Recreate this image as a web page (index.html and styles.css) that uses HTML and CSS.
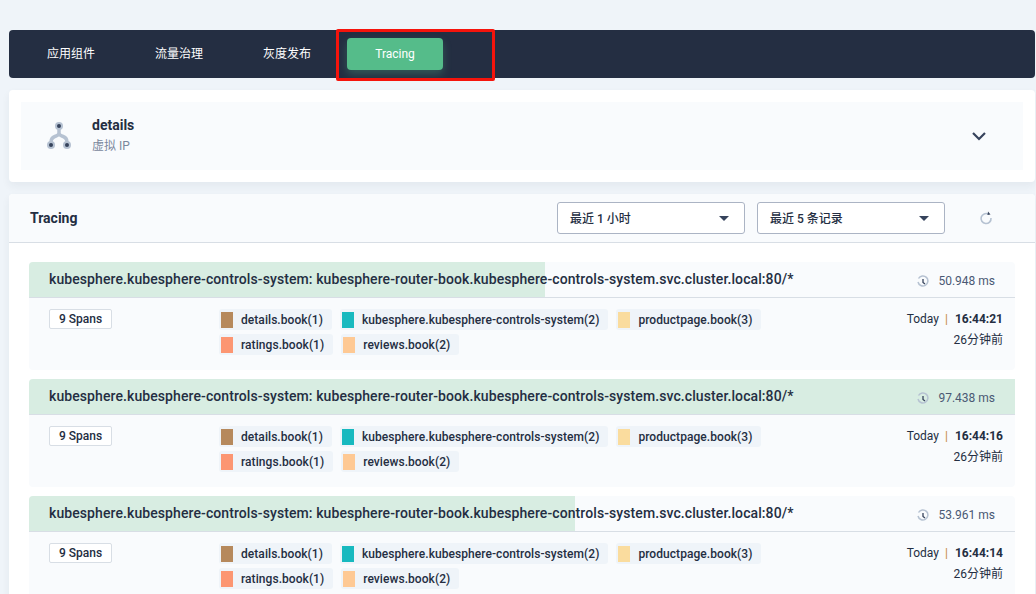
FILE: index.html
```html
<!DOCTYPE html>
<html>
<head>
	<meta charset="utf-8">
	<title>Tracing</title>
	<link rel="stylesheet" href="styles.css">
</head>
<body>
	<!-- 顶部标签栏 -->
	<div class="tabs">
		<a class="tab">应用组件</a>
		<a class="tab">流量治理</a>
		<a class="tab">灰度发布</a>
		<a class="tab tab-active">Tracing</a>
		<div class="mark"></div>
	</div>
	<!-- 服务信息 -->
	<div class="card service-card">
		<div class="service">
			<svg class="service-icon" width="32" height="32" viewBox="0 0 32 32">
				<path d="M16 6V13Q16 15 13 16Q8 17.500 8 22V25M16 13Q16 15 19 16Q24 17.500 24 22V25" fill="none" stroke="#b6c2d2" stroke-width="3.500"/>
				<circle cx="16" cy="6" r="4" fill="#b6c2d2"/>
				<circle cx="8" cy="25" r="4" fill="#b6c2d2"/>
				<circle cx="24" cy="25" r="4" fill="#b6c2d2"/>
				<circle cx="16" cy="6" r="2" fill="#36435c"/>
				<circle cx="8" cy="25" r="2" fill="#36435c"/>
				<circle cx="24" cy="25" r="2" fill="#36435c"/>
			</svg>
			<div class="service-text">
				<div class="service-name">details</div>
				<div class="service-ip">虚拟 IP</div>
			</div>
			<svg class="service-arrow" width="16" height="10" viewBox="0 0 16 10">
				<path d="M2 2L8 8L14 2" fill="none" stroke="#36435c" stroke-width="2.200"/>
			</svg>
		</div>
	</div>
	<!-- Tracing 列表 -->
	<div class="card trace-card">
		<div class="trace-head">
			<h3>Tracing</h3>
			<div class="select">最近 1 小时<i class="caret"></i></div>
			<div class="select">最近 5 条记录<i class="caret"></i></div>
			<svg class="refresh" width="16" height="16" viewBox="0 0 16 16">
				<path d="M10.500 4.200A5 5 0 1 0 13 8" fill="none" stroke="#b6c2d2" stroke-width="1.600"/>
				<path d="M10 1.500L12.500 4.500L9.500 5Z" fill="#36435c"/>
			</svg>
		</div>
		<div class="trace-list">
			<div class="trace">
				<div class="trace-title">
					<div class="trace-bar" style="width: 52.3%"></div>
					<span class="trace-url">kubesphere.kubesphere-controls-system: kubesphere-router-book.kubesphere-controls-system.svc.cluster.local:80/*</span>
					<svg class="clock" width="14" height="14" viewBox="0 0 14 14">
						<path d="M2.500 3.500A5 5 0 1 1 2 7" fill="none" stroke="#b6c2d2" stroke-width="1.500"/>
						<path d="M7 4V7.500L9 9" fill="none" stroke="#36435c" stroke-width="1.300"/>
					</svg>
					<span class="trace-time">50.948 ms</span>
				</div>
				<div class="trace-body">
					<div class="spans">9 Spans</div>
					<div class="services">
						<div class="svc"><i class="dot c1"></i>details.book(1)</div>
						<div class="svc"><i class="dot c2"></i>kubesphere.kubesphere-controls-system(2)</div>
						<div class="svc"><i class="dot c3"></i>productpage.book(3)</div>
						<div class="svc"><i class="dot c4"></i>ratings.book(1)</div>
						<div class="svc"><i class="dot c5"></i>reviews.book(2)</div>
					</div>
					<div class="when">
						<div>Today<span class="sep">|</span><b>16:44:21</b></div>
						<div class="ago">26分钟前</div>
					</div>
				</div>
			</div>
			<div class="trace">
				<div class="trace-title">
					<div class="trace-bar" style="width: 100%"></div>
					<span class="trace-url">kubesphere.kubesphere-controls-system: kubesphere-router-book.kubesphere-controls-system.svc.cluster.local:80/*</span>
					<svg class="clock" width="14" height="14" viewBox="0 0 14 14">
						<path d="M2.500 3.500A5 5 0 1 1 2 7" fill="none" stroke="#b6c2d2" stroke-width="1.500"/>
						<path d="M7 4V7.500L9 9" fill="none" stroke="#36435c" stroke-width="1.300"/>
					</svg>
					<span class="trace-time">97.438 ms</span>
				</div>
				<div class="trace-body">
					<div class="spans">9 Spans</div>
					<div class="services">
						<div class="svc"><i class="dot c1"></i>details.book(1)</div>
						<div class="svc"><i class="dot c2"></i>kubesphere.kubesphere-controls-system(2)</div>
						<div class="svc"><i class="dot c3"></i>productpage.book(3)</div>
						<div class="svc"><i class="dot c4"></i>ratings.book(1)</div>
						<div class="svc"><i class="dot c5"></i>reviews.book(2)</div>
					</div>
					<div class="when">
						<div>Today<span class="sep">|</span><b>16:44:16</b></div>
						<div class="ago">26分钟前</div>
					</div>
				</div>
			</div>
			<div class="trace">
				<div class="trace-title">
					<div class="trace-bar" style="width: 55.4%"></div>
					<span class="trace-url">kubesphere.kubesphere-controls-system: kubesphere-router-book.kubesphere-controls-system.svc.cluster.local:80/*</span>
					<svg class="clock" width="14" height="14" viewBox="0 0 14 14">
						<path d="M2.500 3.500A5 5 0 1 1 2 7" fill="none" stroke="#b6c2d2" stroke-width="1.500"/>
						<path d="M7 4V7.500L9 9" fill="none" stroke="#36435c" stroke-width="1.300"/>
					</svg>
					<span class="trace-time">53.961 ms</span>
				</div>
				<div class="trace-body">
					<div class="spans">9 Spans</div>
					<div class="services">
						<div class="svc"><i class="dot c1"></i>details.book(1)</div>
						<div class="svc"><i class="dot c2"></i>kubesphere.kubesphere-controls-system(2)</div>
						<div class="svc"><i class="dot c3"></i>productpage.book(3)</div>
						<div class="svc"><i class="dot c4"></i>ratings.book(1)</div>
						<div class="svc"><i class="dot c5"></i>reviews.book(2)</div>
					</div>
					<div class="when">
						<div>Today<span class="sep">|</span><b>16:44:14</b></div>
						<div class="ago">26分钟前</div>
					</div>
				</div>
			</div>
		</div>
	</div>
</body>
</html>
```
FILE: styles.css
```css
*{margin: 0px;padding: 0px;box-sizing: border-box;}
html,body{height: 594px;overflow: hidden;}
body{
	background: #eff4f9;
	padding: 30px 1px 0px 9px;
	font-family: Roboto, "Noto Sans CJK SC", sans-serif;
	font-size: 12px;
	color: #242e42;
}
.tabs{
	position: relative;
	display: flex;
	gap: 12px;
	height: 48px;
	padding: 8px 14px;
	background: #242e42;
	border-radius: 4px;
}
.tab{
	width: 96px;
	height: 32px;
	line-height: 33px;
	text-align: center;
	color: #fff;
}
.tab-active{
	background: #55bc8a;
	border-radius: 4px;
	box-shadow: 0px 4px 8px rgba(85,188,138,0.3);
}
.mark{
	position: absolute;
	left: 327px;
	top: -1px;
	width: 159px;
	height: 52px;
	border: 3px solid #f5140c;
	border-radius: 2px;
}
.card{
	background: #fff;
	border-radius: 4px;
	box-shadow: 0px 4px 8px rgba(36,46,66,0.06);
}
.service-card{
	margin-top: 12px;
	padding: 12px;
}
.service{
	display: flex;
	align-items: center;
	height: 68px;
	padding: 0px 36px 0px 22px;
	background: #f9fbfd;
}
.service-text{
	flex: 1;
	margin-left: 17px;
	padding-bottom: 2px;
}
.service-name{
	font-size: 14px;
	font-weight: 700;
	line-height: 20px;
}
.service-ip{
	margin-top: 1px;
	color: #79879c;
	line-height: 20px;
}
.trace-card{
	margin-top: 12px;
	height: 420px;
}
.trace-head{
	display: flex;
	align-items: center;
	height: 49px;
	padding-left: 21px;
	background: #f9fbfd;
	border-bottom: 1px solid #d8dee5;
	border-radius: 4px 4px 0px 0px;
}
.trace-head h3{
	flex: 1;
	font-size: 14px;
	font-weight: 700;
}
.select{
	display: flex;
	align-items: center;
	justify-content: space-between;
	width: 188px;
	height: 32px;
	margin-left: 12px;
	padding: 0px 15px 2px 12px;
	background: #fff;
	border: 1px solid #abb4c4;
	border-radius: 3px;
	font-weight: 500;
}
.caret{
	width: 0px;
	height: 0px;
	margin-top: 2px;
	border-left: 5px solid transparent;
	border-right: 5px solid transparent;
	border-top: 5px solid #36435c;
}
.refresh{
	margin: 0px 41px 0px 33px;
}
.trace-list{
	padding: 19px 20px 0px;
}
.trace{
	height: 108px;
	margin-bottom: 9px;
	background: #f9fbfd;
	border-radius: 4px;
}
.trace-title{
	position: relative;
	display: flex;
	align-items: center;
	height: 36px;
	padding: 0px 20px;
	border-bottom: 1px solid #d8dee5;
}
.trace-bar{
	position: absolute;
	left: 0px;
	top: 0px;
	bottom: 0px;
	background: #d8ede2;
	border-radius: 4px 0px 0px 0px;
}
.trace-url{
	position: relative;
	flex: 1;
	margin-bottom: 2px;
	font-size: 14px;
	font-weight: 500;
	letter-spacing: 0.09px;
}
.clock{
	position: relative;
	margin: 4px 8px 0px 0px;
}
.trace-time{
	position: relative;
	margin-top: 2px;
	color: #4a5974;
}
.trace-body{
	display: flex;
	padding: 11px 12px 0px 20px;
}
.spans{
	width: 63px;
	height: 20px;
	line-height: 18px;
	text-align: center;
	background: #fff;
	border: 1px solid #d8dee5;
	border-radius: 2px;
	font-weight: 500;
}
.services{
	display: flex;
	flex-wrap: wrap;
	align-content: flex-start;
	gap: 4px 8px;
	width: 620px;
	margin-left: 107px;
}
.svc{
	display: flex;
	align-items: center;
	height: 21px;
	padding-right: 9px;
	background: #eff4f9;
	border-radius: 3px;
	font-weight: 500;
	letter-spacing: 0.06px;
}
.dot{
	width: 12px;
	height: 16px;
	margin: 0px 8px 0px 2px;
}
.c1{background: #b6895c;}
.c2{background: #17b9bf;}
.c3{background: #fadc9e;}
.c4{background: #fc9672;}
.c5{background: #fec994;}
.when{
	flex: 1;
	text-align: right;
	line-height: 18px;
	margin-top: 1px;
}
.when b{font-weight: 700;}
.sep{
	margin: 0px 7px 0px 6px;
	color: #c4893c;
}
.ago{
	margin-top: 3px;
}
```
